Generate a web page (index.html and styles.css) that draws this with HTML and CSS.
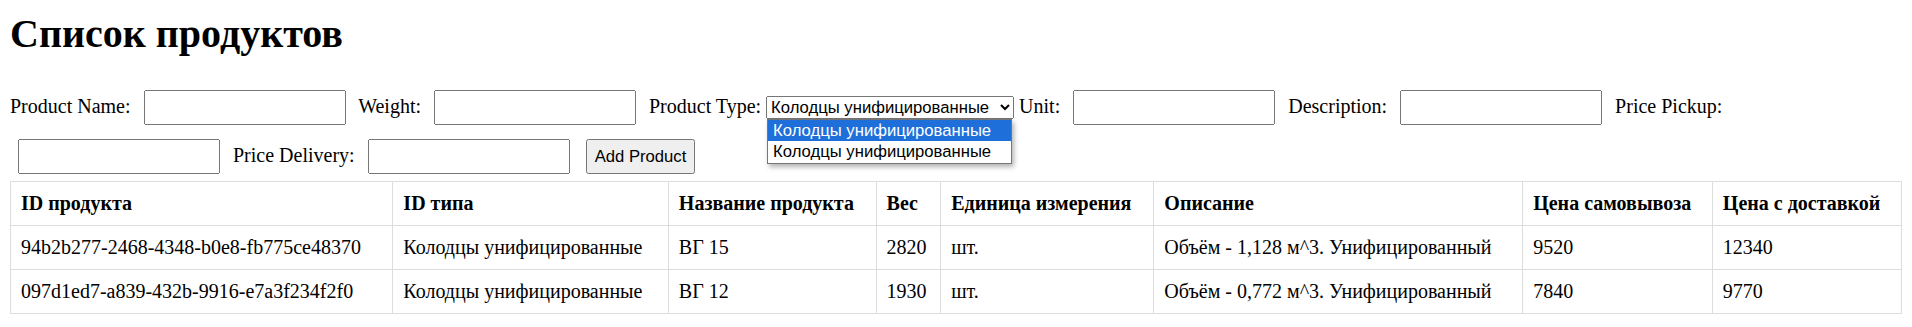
FILE: index.html
```
<!DOCTYPE html>
<html lang="ru">
<head>
	<meta charset="UTF-8">
	<title>Список продуктов</title>
	<link rel="stylesheet" href="styles.css">
</head>
<body>
<h1>Список продуктов</h1>
<form id="product-form">
	<label for="name">Product Name:</label>
	<input type="text" id="name" name="name"/>
	<label for="weight">Weight:</label>
	<input type="text" id="weight" name="weight"/>
	<label for="type">Product Type:</label>
	<span class="select-wrap">
		<select id="type" name="type">
			<option>Колодцы унифицированные</option>
			<option>Колодцы унифицированные</option>
		</select>
		<span class="select-popup">
			<span class="popup-option selected">Колодцы унифицированные</span>
			<span class="popup-option">Колодцы унифицированные</span>
		</span>
	</span>
	<label for="unit">Unit:</label>
	<input type="text" id="unit" name="unit"/>
	<label for="description">Description:</label>
	<input type="text" id="description" name="description"/>
	<label for="price-pickup">Price Pickup:</label>
	<input type="text" id="price-pickup" name="pricePickup"/>
	<label for="price-delivery">Price Delivery:</label>
	<input type="text" id="price-delivery" name="priceDelivery"/><button type="submit" class="btn-add">Add Product</button>
</form>
<table class="product-table">
	<thead>
		<tr>
			<th>ID продукта</th>
			<th>ID типа</th>
			<th>Название продукта</th>
			<th>Вес</th>
			<th>Единица измерения</th>
			<th>Описание</th>
			<th>Цена самовывоза</th>
			<th>Цена с доставкой</th>
		</tr>
	</thead>
	<tbody>
		<tr>
			<td>94b2b277-2468-4348-b0e8-fb775ce48370</td>
			<td>Колодцы унифицированные</td>
			<td>ВГ 15</td>
			<td>2820</td>
			<td>шт.</td>
			<td>Объём - 1,128 м^3. Унифицированный</td>
			<td>9520</td>
			<td>12340</td>
		</tr>
		<tr>
			<td>097d1ed7-a839-432b-9916-e7a3f234f2f0</td>
			<td>Колодцы унифицированные</td>
			<td>ВГ 12</td>
			<td>1930</td>
			<td>шт.</td>
			<td>Объём - 0,772 м^3. Унифицированный</td>
			<td>7840</td>
			<td>9770</td>
		</tr>
	</tbody>
</table>
</body>
</html>
```

FILE: styles.css
```
body {
	margin: 10px;
	font-family: "Liberation Serif", "Times New Roman", serif;
	font-size: 20px;
	color: #000
}
h1 {
	font-size: 40px;
	margin: 0 0 26px 0
}
label {
	white-space: nowrap
}
input, select, button {
	font-family: "Liberation Sans", Arial, sans-serif;
	font-size: 16.67px
}
input {
	width: 202px;
	height: 35px;
	padding: 0 8px;
	margin: 7px 8px;
	box-sizing: border-box
}
select {
	width: 248px;
	margin: 0
}
.btn-add {
	height: 35px;
	padding: 0 7px;
	margin: 7px 0 7px 8px;
	box-sizing: border-box
}
.select-wrap {
	position: relative;
	display: inline-block
}
.select-popup {
	position: absolute;
	top: 100%;
	left: 1px;
	right: 2px;
	z-index: 10;
	display: block;
	background-color: #fff;
	border: 1px solid #767676;
	box-shadow: 2px 3px 5px rgba(0, 0, 0, 0.3);
	font-family: "Liberation Sans", Arial, sans-serif;
	font-size: 16.67px
}
.popup-option {
	display: block;
	padding: 1px 5px;
	line-height: 19.5px;
	white-space: nowrap;
	color: #000
}
.popup-option.selected {
	background-color: #1e6fd9;
	color: #fff
}
.product-table {
	width: 100%;
	border-collapse: collapse
}
.product-table th, .product-table td {
	border: 1px solid #ddd;
	padding: 10px;
	text-align: left
}
```
